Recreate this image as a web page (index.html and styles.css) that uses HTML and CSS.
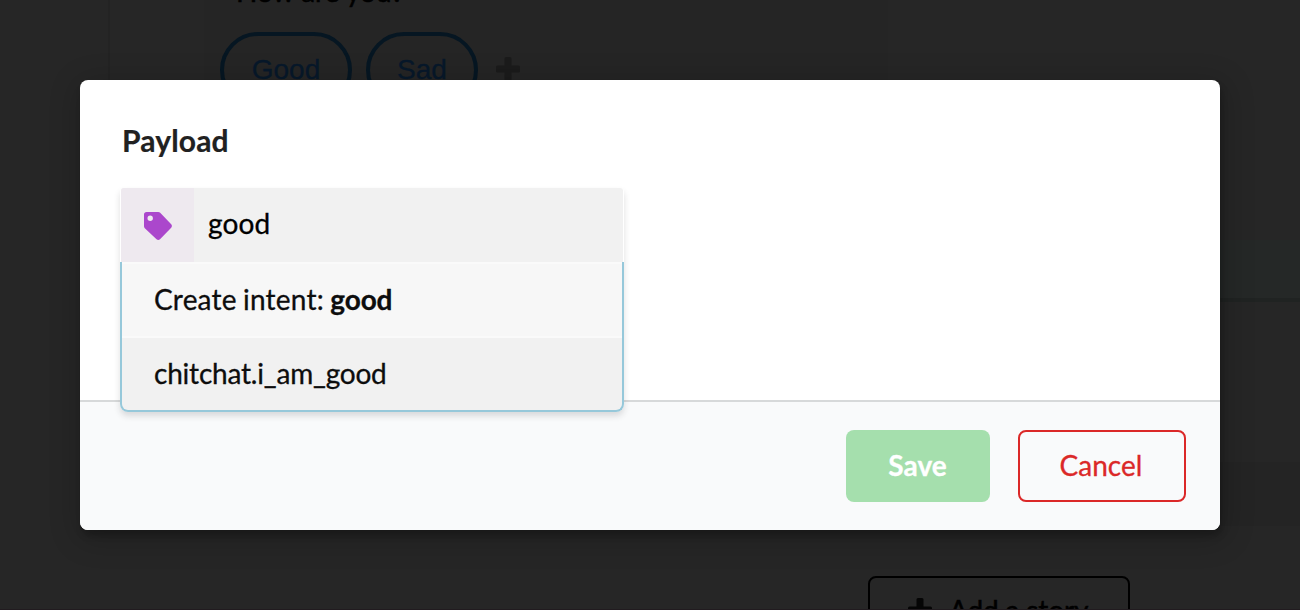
FILE: index.html
```html
<!DOCTYPE html>
<html lang="en">
<head>
<meta charset="utf-8">
<title>Payload</title>
<link rel="stylesheet" href="styles.css">
</head>
<body>
<div class="page">
  <div class="conversation">
    <div class="message">
      <p class="question">How are you?</p>
      <div class="replies">
        <span class="pill">Good</span>
        <span class="pill pill-small">Sad</span>
        <svg class="plus" viewBox="0 0 24 24"><path d="M8.500 1.500Q8.500 0 10 0H14Q15.500 0 15.500 1.500V8.500H22.500Q24 8.500 24 10V14Q24 15.500 22.500 15.500H15.500V22.500Q15.500 24 14 24H10Q8.500 24 8.500 22.500V15.500H1.500Q0 15.500 0 14V10Q0 8.500 1.500 8.500H8.500Z"/></svg>
      </div>
    </div>
  </div>
  <div class="side">
    <div class="side-head"></div>
    <div class="side-body"></div>
    <div class="side-foot"></div>
  </div>
  <div class="story-actions">
    <div class="add-story">
      <svg class="plus" viewBox="0 0 24 24"><path d="M8.500 1.500Q8.500 0 10 0H14Q15.500 0 15.500 1.500V8.500H22.500Q24 8.500 24 10V14Q24 15.500 22.500 15.500H15.500V22.500Q15.500 24 14 24H10Q8.500 24 8.500 22.500V15.500H1.500Q0 15.500 0 14V10Q0 8.500 1.500 8.500H8.500Z"/></svg>
      <span>Add a story</span>
    </div>
  </div>
</div>
<div class="dimmer">
  <div class="modal">
    <div class="content">
      <h3 class="title">Payload</h3>
      <div class="intent">
        <div class="intent-label">
          <div class="intent-icon">
            <svg class="tag" viewBox="0 0 28 28"><path fill-rule="evenodd" d="M0 2.600A2.600 2.600 0 0 1 2.600 0H14.200Q15.400 0 16.200 .8L27.200 12.300Q28.600 14 27.200 15.700L16 27.200Q14.300 28.700 12.500 27.200L.8 16.200Q0 15.400 0 14.200ZM6.200 3.600A2.700 2.700 0 1 0 6.200 9A2.700 2.700 0 1 0 6.200 3.600Z"/></svg>
          </div>
          <span class="intent-text">good</span>
        </div>
        <div class="menu">
          <div class="item item-create">Create intent: <b>good</b></div>
          <div class="item item-match">chitchat.i_am_good</div>
        </div>
      </div>
    </div>
    <div class="actions">
      <button class="button save">Save</button>
      <button class="button cancel">Cancel</button>
    </div>
  </div>
</div>
</body>
</html>
```
FILE: styles.css
```css
* { box-sizing: border-box; }
body {
  margin: 0;
  height: 610px;
  overflow: hidden;
  position: relative;
  background: #262626;
  font-family: Lato, "Liberation Sans", sans-serif;
  font-size: 28px;
}
.page {
  height: 610px;
  display: grid;
  grid-template-columns: 1fr 80px;
  grid-template-rows: 526px 84px;
  border-bottom: 1px solid #211b1f;
  overflow: hidden;
}
.conversation {
  margin-left: 108px;
  border-left: 2px solid #232323;
  padding-left: 94px;
}
.message {
  width: 684px;
  height: 100%;
  padding-left: 16px;
  background: #252525;
  overflow: hidden;
}
.question {
  margin: -26px 0 0 16px;
  line-height: 34px;
  color: #000;
  -webkit-text-stroke: .5px #000;
}
.replies {
  display: flex;
  align-items: center;
  margin-top: 24px;
  gap: 14px;
  font-family: "Liberation Sans", Arial, sans-serif;
}
.pill {
  width: 132px;
  height: 76px;
  border: 4px solid #061622;
  border-radius: 38px;
  color: #07182a;
  line-height: 68px;
  text-align: center;
  -webkit-text-stroke: .3px #07182a;
}
.pill-small { width: 112px; }
.plus {
  width: 24px;
  height: 24px;
  fill: #1b1b1b;
}
.replies .plus { margin: 0 0 2px 4px; }
.side {
  display: grid;
  grid-template-rows: 302px 160px 64px;
}
.side-head {
  background: linear-gradient(#262626 240px, #252827 240px);
  border-bottom: 4px solid #202322;
}
.side-foot { background: #242424; }
.story-actions {
  grid-column: 1 / -1;
  padding: 50px 0 0 868px;
}
.add-story {
  display: flex;
  align-items: center;
  gap: 17px;
  width: 262px;
  height: 72px;
  padding-left: 38px;
  padding-bottom: 4px;
  border: 2px solid #000;
  border-radius: 8px;
  color: #000;
  letter-spacing: -.15px;
  -webkit-text-stroke: .5px #000;
}
.add-story .plus {
  fill: #050505;
  stroke: none;
}
.dimmer {
  position: absolute;
  inset: 0;
  padding: 80px;
}
.modal {
  height: 450px;
  border-radius: 8px;
  background: #fff;
  box-shadow: 2px 6px 6px 0 rgba(0,0,0,.2), 2px 6px 30px 4px rgba(0,0,0,.2);
}
.content {
  height: 320px;
  padding: 41px 40px 0;
}
.title {
  margin: 0 0 29px 2px;
  color: #212121;
  font-size: 30px;
  line-height: 38px;
  font-weight: 700;
  letter-spacing: .15px;
  -webkit-text-stroke: .2px #212121;
}
.intent {
  position: relative;
  z-index: 1;
  width: 504px;
  border-radius: 4px 4px 8px 8px;
  box-shadow: 0 4px 6px rgba(34,36,38,.15);
}
.intent-label {
  display: flex;
  height: 74px;
  margin: 0 1px;
  background: #f1f1f1;
  color: #000;
  border-radius: 3px 3px 0 0;
}
.intent-icon {
  display: grid;
  place-items: center;
  width: 73px;
  padding: 1px 0 0 1px;
  background: #eee9ef;
  border-radius: 3px 0 0;
}
.tag {
  width: 28px;
  height: 28px;
  fill: #ab47cc;
}
.intent-text {
  margin-left: 14px;
  line-height: 71px;
  letter-spacing: .15px;
  -webkit-text-stroke: .3px #000;
}
.menu {
  border: 2px solid #96c8da;
  border-top: 0;
  border-radius: 0 0 8px 8px;
  background: #f1f1f1;
  overflow: hidden;
}
.item {
  height: 72px;
  padding-left: 32px;
  color: #0d0d0d;
  line-height: 70px;
  -webkit-text-stroke: .3px #0d0d0d;
}
.item-create {
  height: 76px;
  border: solid #fafafa;
  border-width: 2px 0;
  background: #f7f7f7;
  letter-spacing: .2px;
  word-spacing: -1px;
}
.item-create b { letter-spacing: -.1px; }
.item-match { letter-spacing: -.2px; }
.actions {
  display: flex;
  justify-content: flex-end;
  gap: 28px;
  height: 130px;
  padding: 28px 34px;
  border-top: 2px solid #d7d9da;
  border-radius: 0 0 8px 8px;
  background: #f9fafb;
}
.button {
  height: 72px;
  padding: 0 2px 2px 0;
  border: 0;
  border-radius: 8px;
  font: 400 28px/68px Lato, "Liberation Sans", sans-serif;
}
.save {
  width: 144px;
  padding-right: 1px;
  background: #a5dfad;
  color: #fff;
  font-weight: 700;
  -webkit-text-stroke: .3px #fff;
}
.cancel {
  width: 168px;
  border: 2px solid #db2828;
  line-height: 66px;
  background: transparent;
  color: #db2828;
  -webkit-text-stroke: .3px #db2828;
}
```
